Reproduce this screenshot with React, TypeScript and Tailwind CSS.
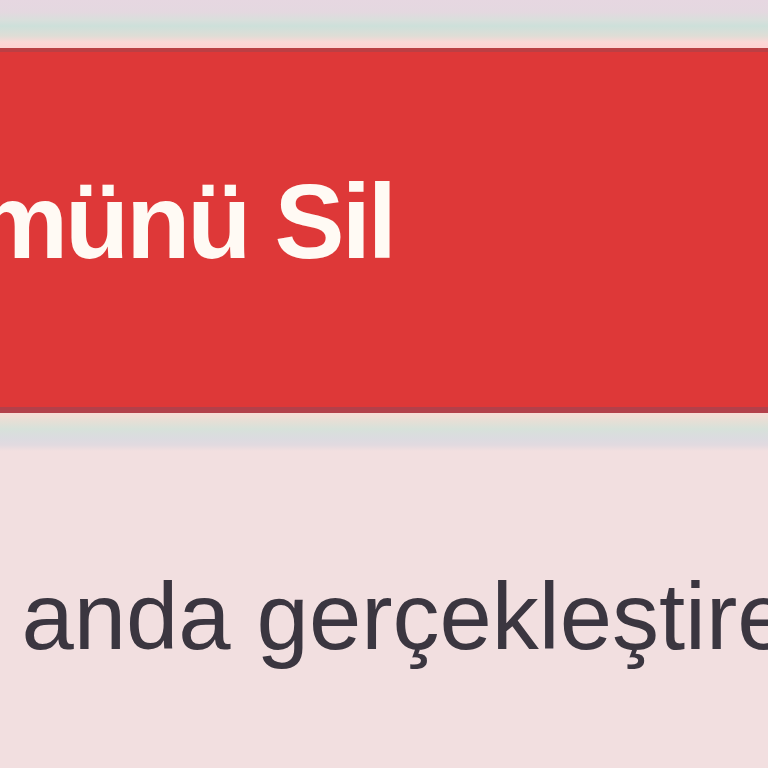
export default function App() {
  return (
    <div
      className="w-[768px] h-[768px] overflow-hidden bg-[#f2dfe0] flex flex-col"
      style={{ fontFamily: '"Liberation Sans", Arial, sans-serif' }}
    >
      <div className="h-[48px] shrink-0 bg-[linear-gradient(to_bottom,#e6d7e1_0px,#e4d8e0_12px,#d9dfdc_20px,#cde0da_26px,#dfddd6_36px,#fbd7d6_42px,#fdd3d3_46px)]" />

      <div className="h-[365px] shrink-0 bg-[#de3838] border-t-[4px] border-b-[6px] border-t-[#bb3f44] border-b-[#b3404a] flex items-center">
        <div className="w-[394px] flex justify-end whitespace-nowrap -mt-[16px]">
          <span className="text-[#fffaf4] font-bold text-[105px] leading-none tracking-[-3px]">
            Tümünü Sil
          </span>
        </div>
      </div>

      <div className="h-[38px] shrink-0 bg-[linear-gradient(to_bottom,#f8dcd6_0px,#e6dfd6_8px,#d7e1da_16px,#dcdbe0_26px,#e2dae0_32px,#f2dfe0_38px)]" />

      <div className="mt-[119px] whitespace-nowrap ml-[-104px]">
        <span className="text-[#3b3640] text-[94px] leading-none">
          şu anda gerçekleştirebilirsiniz
        </span>
      </div>
    </div>
  );
}
